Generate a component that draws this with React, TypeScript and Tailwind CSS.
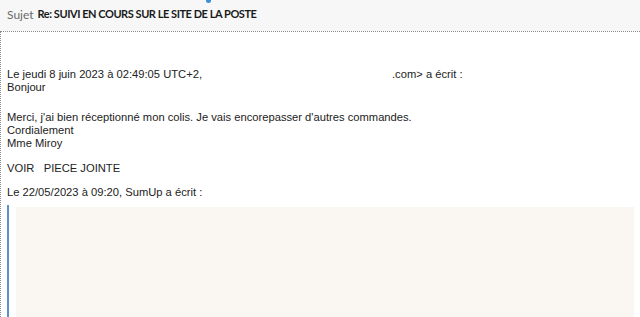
export default function App() {
  return (
    <div className="w-[640px] h-[317px] overflow-hidden bg-white relative">
      {/* Header */}
      <div className="h-[31px] bg-[#f7f7f7] flex items-center pl-[7px] pb-[2px] font-['Lato','Open_Sans',sans-serif] text-[12px]">
        <span className="text-[#6b6b6b]">Sujet</span>
        <span className="ml-[4px] font-bold text-[#1a1a1a] text-[11px] tracking-[-0.45px]">Re: SUIVI EN COURS SUR LE SITE DE LA POSTE</span>
      </div>
      <div className="absolute left-[206px] top-0 w-[5px] h-[3px] rounded-b-full bg-[#3b8fd9]" />

      {/* Body */}
      <div className="h-[286px] border-t border-l border-dotted border-[#8a8a8a] pl-[6px] pt-[36px] font-['Liberation_Sans',Arial,sans-serif] text-[11.2px] leading-[13px] text-[#222]">
        <div>
          Le jeudi 8 juin 2023 à 02:49:05 UTC+2,
          <span className="inline-block w-[190px]" />
          .com&gt; a écrit :
        </div>
        <div>Bonjour</div>
        <div className="mt-[17px]">Merci, j'ai bien réceptionné mon colis. Je vais encorepasser d'autres commandes.</div>
        <div>Cordialement</div>
        <div>Mme Miroy</div>
        <div className="mt-[12px]">VOIR&nbsp;&nbsp;&nbsp;PIECE JOINTE</div>
        <div className="mt-[11px]">Le 22/05/2023 à 09:20, SumUp a écrit :</div>
        <div className="mt-[6px] h-[120px] border-l-2 border-[#5f8fc8] pl-[7px] pr-[6px] pt-[2px]">
          <div className="h-full bg-[#faf7f3]" />
        </div>
      </div>
    </div>
  )
}
